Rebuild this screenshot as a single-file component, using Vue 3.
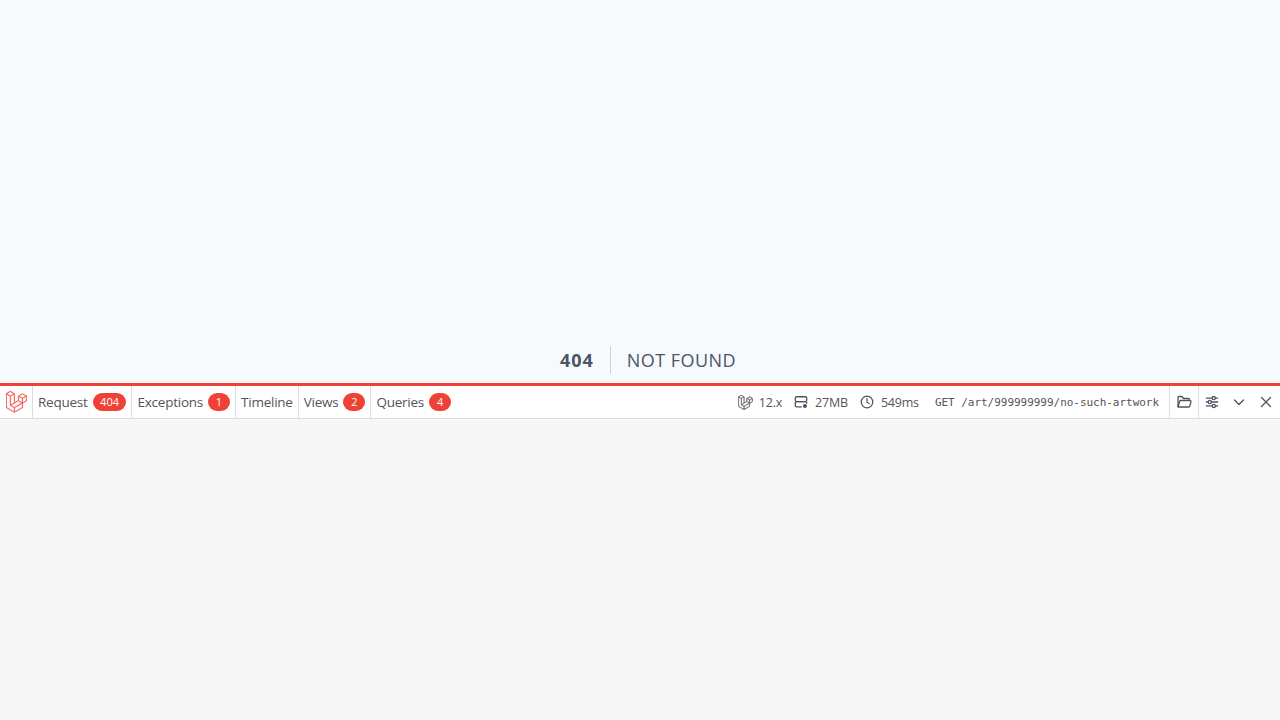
<template>
  <div class="page">
    <div class="notfound">
      <div class="code">404</div>
      <div class="msg">NOT FOUND</div>
    </div>
    <div class="debugbar">
      <div class="header">
        <div class="logo">
          <svg width="21" height="22" viewBox="0 0 50 52" fill="#f0524a" stroke="#f0524a" stroke-width="0.8">
            <path :d="laravel"/>
          </svg>
        </div>
        <div v-for="t in tabs" :key="t.label" class="tab">
          <span>{{ t.label }}</span>
          <span v-if="t.badge" class="badge">{{ t.badge }}</span>
        </div>
        <div class="right">
          <div class="stat first-stat">
            <svg width="15" height="15" viewBox="0 0 50 52" fill="#555" stroke="#555" stroke-width="1.2">
              <path :d="laravel"/>
            </svg>
            <span>12.x</span>
          </div>
          <div class="stat">
            <svg width="14" height="14" viewBox="0 0 16 16" fill="none" stroke="#4b5563" stroke-width="1.500">
              <rect x="1.500" y="2" width="13" height="5.500" rx="1.500"/>
              <path d="M9 13.500H3A1.500 1.500 0 0 1 1.500 12V9A1.500 1.500 0 0 1 3 7.500H13A1.500 1.500 0 0 1 14.500 9V10"/>
              <circle cx="12.500" cy="12.500" r="2.300" fill="#4b5563" stroke="none"/>
            </svg>
            <span>27MB</span>
          </div>
          <div class="stat">
            <svg width="14" height="14" viewBox="0 0 16 16" fill="none" stroke="#4b5563" stroke-width="1.400" stroke-linecap="round">
              <circle cx="8" cy="8" r="6.600"/>
              <path d="M8 4V8.300L10.500 9.800"/>
            </svg>
            <span>549ms</span>
          </div>
          <div class="uri">GET /art/999999999/no-such-artwork</div>
          <div class="actions">
            <div class="action first">
              <svg width="16" height="16" viewBox="0 0 16 16" fill="none" stroke="#4b5563" stroke-width="1.300" stroke-linejoin="round">
                <path d="M2 13V3.500A1 1 0 0 1 3 2.500H6L7.500 4.500H12.500A1 1 0 0 1 13.500 5.500V6.500"/>
                <path d="M2 13L3.700 7.300A1 1 0 0 1 4.700 6.500H14A1 1 0 0 1 15 7.700L13.700 12.300A1 1 0 0 1 12.700 13Z"/>
              </svg>
            </div>
            <div class="action">
              <svg width="14" height="14" viewBox="0 0 16 16" fill="none" stroke="#4b5563" stroke-width="1.500" stroke-linecap="round">
                <path d="M1.500 3.500H8M12 3.500H14.500M1.500 8H3.500M7.500 8H14.500M1.500 12.500H8M12 12.500H14.500"/>
                <circle cx="10" cy="3.500" r="1.800"/>
                <circle cx="5.500" cy="8" r="1.800"/>
                <circle cx="10" cy="12.500" r="1.800"/>
              </svg>
            </div>
            <div class="action">
              <svg width="12" height="12" viewBox="0 0 12 12" fill="none" stroke="#4b5563" stroke-width="1.300" stroke-linecap="round" stroke-linejoin="round">
                <path d="M1.500 4L6 8.500L10.500 4"/>
              </svg>
            </div>
            <div class="action">
              <svg width="12" height="12" viewBox="0 0 12 12" fill="none" stroke="#4b5563" stroke-width="1.300" stroke-linecap="round">
                <path d="M1.500 1.500L10.500 10.500M10.500 1.500L1.500 10.500"/>
              </svg>
            </div>
          </div>
        </div>
      </div>
      <div class="body"></div>
    </div>
  </div>
</template>

<script setup>
const tabs = [
  { label: 'Request', badge: '404' },
  { label: 'Exceptions', badge: '1' },
  { label: 'Timeline' },
  { label: 'Views', badge: '2' },
  { label: 'Queries', badge: '4' }
]
const laravel = 'M49.626 11.564a.809.809 0 0 1 .028.209v10.972a.8.8 0 0 1-.402.694l-9.209 5.302V39.25c0 .286-.152.55-.4.694L20.42 51.01c-.044.025-.092.041-.14.058-.018.006-.035.017-.054.022a.805.805 0 0 1-.41 0c-.022-.006-.042-.018-.063-.026-.044-.016-.09-.03-.132-.054L.402 39.944A.801.801 0 0 1 0 39.25V6.334c0-.072.01-.142.028-.21.006-.023.02-.044.028-.067.015-.042.029-.085.051-.124.015-.026.037-.047.055-.071.023-.032.044-.065.071-.093.023-.023.053-.04.079-.06.029-.024.055-.05.088-.069h.001l9.61-5.533a.802.802 0 0 1 .8 0l9.61 5.533h.002c.032.02.059.045.088.068.026.02.055.038.078.06.028.029.048.062.072.094.017.024.04.045.054.071.023.04.036.082.052.124.008.023.022.044.028.068a.809.809 0 0 1 .028.209v20.559l8.008-4.611v-10.51c0-.07.01-.141.028-.208.007-.024.02-.045.028-.068.016-.042.03-.085.052-.124.015-.026.037-.047.054-.071.024-.032.044-.065.072-.093.023-.023.052-.04.078-.06.03-.024.056-.05.088-.069h.001l9.611-5.533a.801.801 0 0 1 .8 0l9.61 5.533c.034.02.06.045.09.068.025.02.054.038.077.06.028.029.048.062.072.094.018.024.04.045.054.071.023.039.036.082.052.124.009.023.022.044.028.068zm-1.574 10.718v-9.124l-3.363 1.936-4.646 2.675v9.124l8.01-4.611zm-9.61 16.505v-9.13l-4.57 2.61-13.05 7.448v9.216l17.62-10.144zM1.602 7.719v31.068L19.22 48.93v-9.214l-9.204-5.209-.003-.002-.004-.002c-.031-.018-.057-.044-.086-.066-.025-.02-.054-.036-.076-.058l-.002-.003c-.026-.025-.044-.056-.066-.084-.02-.027-.044-.05-.06-.078l-.001-.003c-.018-.03-.029-.066-.042-.1-.013-.03-.03-.058-.038-.09v-.001c-.01-.038-.012-.078-.016-.117-.004-.03-.012-.06-.012-.09v-.002-21.481L4.965 9.654 1.602 7.72zm8.81-5.994L2.405 6.334l8.005 4.609 8.006-4.61-8.006-4.608zm4.164 28.764l4.645-2.674V7.719l-3.363 1.936-4.646 2.675v20.096l3.364-1.937zM39.243 7.164l-8.006 4.609 8.006 4.609 8.005-4.61-8.005-4.608zm-.801 10.605l-4.646-2.675-3.363-1.936v9.124l4.645 2.674 3.364 1.937v-9.124zM20.02 38.33l11.743-6.704 5.87-3.35-8-4.606-9.211 5.303-8.395 4.833 7.993 4.524z'
</script>

<style>
html, body { margin: 0; }
</style>

<style scoped>
.page {
  height: 720px;
  background: #f7fafc;
  display: flex;
  align-items: center;
  justify-content: center;
  font-family: "Open Sans", "Noto Sans", sans-serif;
  overflow: hidden;
}
.notfound {
  display: flex;
  align-items: center;
  color: #4a5568;
  font-size: 18px;
  letter-spacing: 0.45px;
}
.code {
  padding: 0 16px;
  border-right: 1px solid #cbd5e0;
  font-weight: 700;
  line-height: 28px;
  letter-spacing: 1px;
}
.msg {
  margin-left: 16px;
  text-transform: uppercase;
  line-height: 28px;
}
.debugbar {
  position: fixed;
  left: 0;
  right: 0;
  bottom: 0;
  height: 337px;
  box-sizing: border-box;
  border-top: 3px solid #ef4136;
  background: #f7f7f7;
  display: flex;
  flex-direction: column;
  font-size: 13.500px;
  color: #555;
}
.header {
  height: 32px;
  background: #fff;
  border-bottom: 1px solid #ddd;
  display: flex;
  align-items: stretch;
}
.logo {
  width: 33px;
  border-right: 1px solid #ddd;
  display: flex;
  align-items: center;
  justify-content: center;
  box-sizing: border-box;
}
.tab {
  display: flex;
  align-items: center;
  gap: 5px;
  padding: 0 5px;
  border-right: 1px solid #ddd;
  letter-spacing: -0.24px;
}
.tab:nth-last-child(2) { border-right: 0; }
.badge {
  background: #ef4136;
  color: #fff;
  font-size: 11px;
  line-height: 18px;
  height: 18px;
  min-width: 7px;
  padding: 0 7.500px;
  border-radius: 9px;
  text-align: center;
  letter-spacing: 0;
}
.right {
  margin-left: auto;
  display: flex;
  align-items: stretch;
}
.stat {
  display: flex;
  align-items: center;
  gap: 7px;
  margin-right: 12px;
  font-size: 12.500px;
  letter-spacing: -0.2px;
}
.first-stat { gap: 6px; }
.uri {
  display: flex;
  align-items: center;
  font-family: "DejaVu Sans Mono", monospace;
  font-size: 11px;
  letter-spacing: -0.03px;
  padding: 0 10px 0 4px;
  color: #555;
}
.actions {
  display: flex;
  align-items: stretch;
  padding-right: 1px;
}
.action {
  width: 26.670px;
  display: flex;
  align-items: center;
  justify-content: center;
  box-sizing: border-box;
}
.action.first {
  border-left: 1px solid #ddd;
  border-right: 1px solid #ddd;
  width: 30px;
}
</style>
